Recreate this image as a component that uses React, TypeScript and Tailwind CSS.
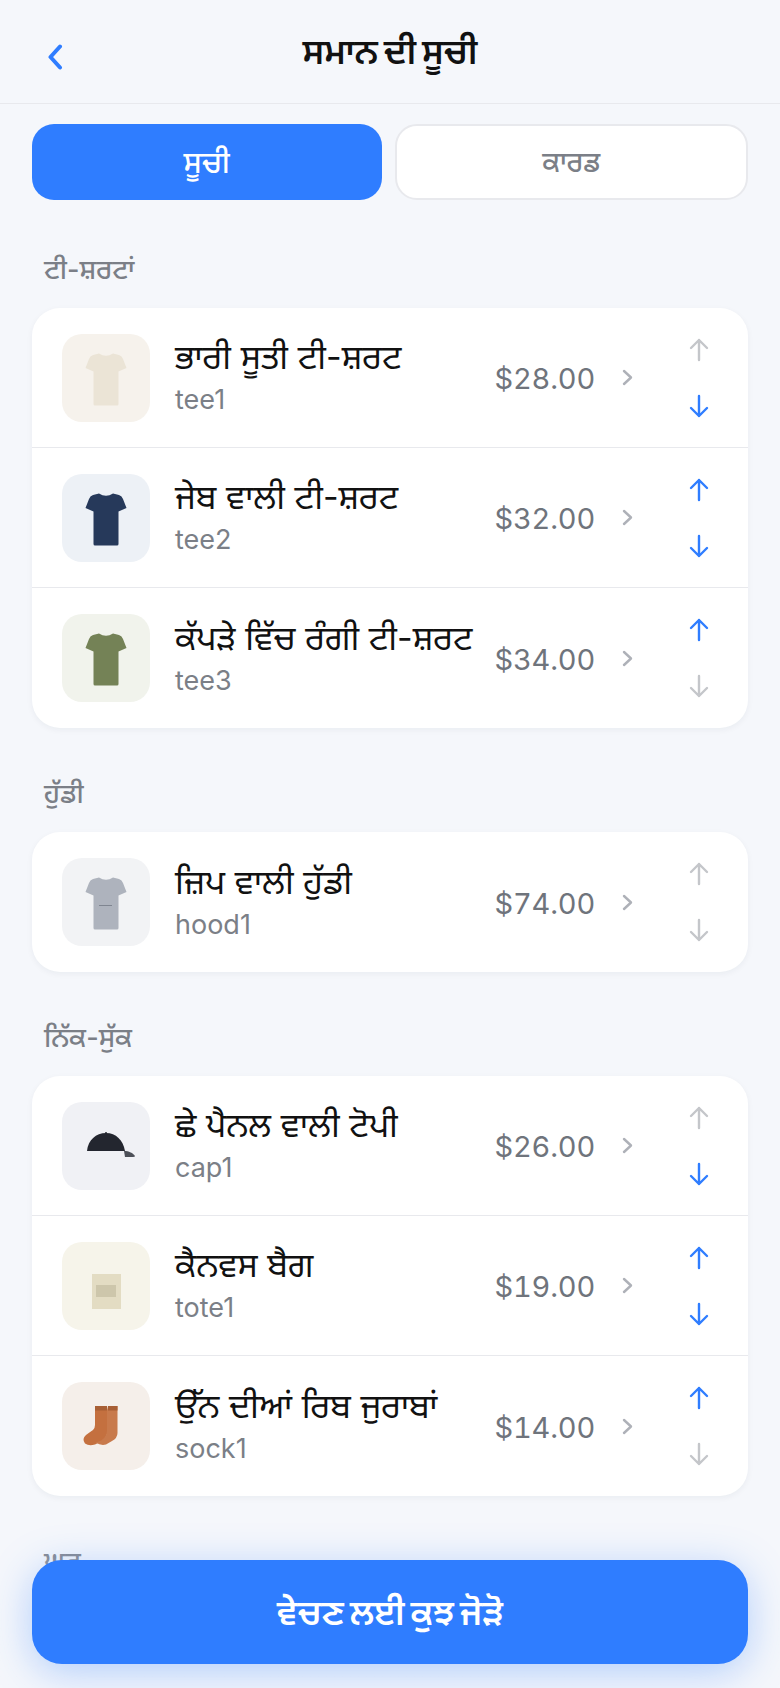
import React from 'react';

type Item = {
    name: string;
    sku: string;
    price: string;
    tile: string;
    art: React.ReactNode;
    up: boolean;
    down: boolean;
};

const Tee = ({ color, line }: { color: string; line?: boolean }) => (
    <svg width="88" height="88" viewBox="0 0 88 88">
        <path
            d="M37 19.5 Q44 24 51 19.5 L57 21 Q60 22 61 25 L64.5 34 L56.5 37.5 L56.5 70 Q56.5 71.5 55 71.5 L33 71.5 Q31.5 71.5 31.5 70 L31.5 37.5 L23.5 34 L27 25 Q28 22 31 21 Z"
            fill={color}
        />
        {line && <rect x="37" y="47" width="13" height="1" fill="#7f8590" />}
    </svg>
);

const Cap = () => (
    <svg width="88" height="88" viewBox="0 0 88 88">
        <path d="M25 49 C26 38 34 31 44 31 C54 31 61 38 63 49 Z" fill="#23262f" />
        <circle cx="44" cy="31" r="1" fill="#23262f" />
        <path d="M62 49 C67 49 71 51 73 54 Q73 55 71 55 L63 55 Z" fill="#4d5058" />
    </svg>
);

const Tote = () => (
    <svg width="88" height="88" viewBox="0 0 88 88">
        <rect x="30" y="32" width="29" height="35" fill="#e3dcc3" />
        <rect x="34" y="43" width="20" height="12" fill="#cdc6ab" />
    </svg>
);

const Socks = () => (
    <svg width="88" height="88" viewBox="0 0 88 88">
        <path d="M33 24 H45 V52 Q44 57 38 60 L33 62.5 Q27 64.5 23 61.5 Q19.5 57 24 53 Q28 50 31 48 Q33 46 33 43 Z" fill="#c4703f" />
        <path d="M46 24 H55.5 V51 Q55.5 56 50 59 L44 62.5 Q39 64 33.5 60.5 Q40 59 43 55 Q45 52 45 48 V28 Z" fill="#c87a4c" />
        <rect x="33" y="24" width="12" height="4.5" fill="#a85f35" />
        <rect x="46" y="24" width="9.5" height="4.5" fill="#a85f35" />
    </svg>
);

const sections: { title: string; items: Item[] }[] = [
    {
        title: 'ਟੀ-ਸ਼ਰਟਾਂ',
        items: [
            { name: 'ਭਾਰੀ ਸੂਤੀ ਟੀ-ਸ਼ਰਟ', sku: 'tee1', price: '$28.00', tile: 'bg-[#f6f2ec]', art: <Tee color="#ebe4d6" />, up: false, down: true },
            { name: 'ਜੇਬ ਵਾਲੀ ਟੀ-ਸ਼ਰਟ', sku: 'tee2', price: '$32.00', tile: 'bg-[#edf1f6]', art: <Tee color="#26395a" />, up: true, down: true },
            { name: 'ਕੱਪੜੇ ਵਿੱਚ ਰੰਗੀ ਟੀ-ਸ਼ਰਟ', sku: 'tee3', price: '$34.00', tile: 'bg-[#f1f3ec]', art: <Tee color="#748256" />, up: true, down: false },
        ],
    },
    {
        title: 'ਹੁੱਡੀ',
        items: [
            { name: 'ਜ਼ਿਪ ਵਾਲੀ ਹੁੱਡੀ', sku: 'hood1', price: '$74.00', tile: 'bg-[#f2f3f5]', art: <Tee color="#aeb3bd" line />, up: false, down: false },
        ],
    },
    {
        title: 'ਨਿੱਕ-ਸੁੱਕ',
        items: [
            { name: 'ਛੇ ਪੈਨਲ ਵਾਲੀ ਟੋਪੀ', sku: 'cap1', price: '$26.00', tile: 'bg-[#f0f1f5]', art: <Cap />, up: false, down: true },
            { name: 'ਕੈਨਵਸ ਬੈਗ', sku: 'tote1', price: '$19.00', tile: 'bg-[#f6f4ea]', art: <Tote />, up: true, down: true },
            { name: 'ਉੱਨ ਦੀਆਂ ਰਿਬ ਜੁਰਾਬਾਂ', sku: 'sock1', price: '$14.00', tile: 'bg-[#f5efea]', art: <Socks />, up: true, down: false },
        ],
    },
];

const Arrow = ({ dir, on }: { dir: 'up' | 'down'; on: boolean }) => (
    <svg width="20" height="24" viewBox="0 0 20 24" fill="none" stroke={on ? '#2f7dff' : '#c4c6ca'} strokeWidth="2.4" strokeLinecap="round" strokeLinejoin="round">
        {dir === 'up' ? <path d="M10 2 V22 M2 10 L10 2 L18 10" /> : <path d="M10 22 V2 M2 14 L10 22 L18 14" />}
    </svg>
);

const Row = ({ item, last }: { item: Item; last: boolean }) => (
    <div className={`flex h-[140px] items-center pl-[30px] pr-[39px] ${last ? '' : 'border-b border-[#e8e9ed]'}`}>
        <div className={`flex h-[88px] w-[88px] shrink-0 items-center justify-center rounded-[20px] ${item.tile}`}>{item.art}</div>
        <div className="ml-[25px] flex min-w-0 flex-1 flex-col gap-[5px]">
            <div className="whitespace-nowrap text-[34px] leading-[40px] text-[#111111]">{item.name}</div>
            <div className="text-[27px] leading-[36px] text-[#7b7f87]">{item.sku}</div>
        </div>
        <div className="pt-[3px] text-[29px] tracking-[-0.2px] text-[#6f747c] tabular-nums">{item.price}</div>
        <svg className="ml-[27px]" width="11" height="17" viewBox="0 0 11 17" fill="none" stroke="#aeb1b8" strokeWidth="2.4" strokeLinecap="round" strokeLinejoin="round">
            <path d="M2 2 L9 8.5 L2 15" />
        </svg>
        <div className="ml-[56px] flex w-[20px] flex-col items-center gap-[32px]">
            <Arrow dir="up" on={item.up} />
            <Arrow dir="down" on={item.down} />
        </div>
    </div>
);

export default function App() {
    return (
        <div className="relative h-[1688px] w-[780px] overflow-hidden bg-[#f5f7fb] font-['Inter','Noto_Sans_Gurmukhi','Noto_Sans',sans-serif]">
            <header className="relative flex h-[104px] items-center justify-center border-b border-[#e8e9ed]">
                <svg className="absolute top-[44px] left-[46px]" width="18" height="26" viewBox="0 0 18 26" fill="none" stroke="#2f7dff" strokeWidth="4" strokeLinecap="round" strokeLinejoin="round">
                    <path d="M14 2.5 L4.5 13 L14 23.5" />
                </svg>
                <h1 className="text-[35px] font-semibold text-[#111111] [word-spacing:-3px]">ਸਮਾਨ ਦੀ ਸੂਚੀ</h1>
            </header>

            <div className="flex gap-[13px] px-[32px] pt-[20px]">
                <div className="flex h-[76px] flex-1 items-center justify-center rounded-[22px] bg-[#2f7dff] text-[30px] font-medium text-white">ਸੂਚੀ</div>
                <div className="flex h-[76px] flex-1 items-center justify-center rounded-[22px] border-2 border-[#e8e9ed] bg-white text-[28px] font-medium text-[#7b7f87]">ਕਾਰਡ</div>
            </div>

            <main className="px-[32px] pt-[50px]">
                {sections.map((section) => (
                    <section key={section.title} className="mb-[46px]">
                        <h2 className="mb-[18px] pl-[12px] text-[27px] leading-[40px] font-medium text-[#7b7f87]">{section.title}</h2>
                        <div className="rounded-[28px] bg-white shadow-[0_2px_6px_rgba(20,30,60,0.05)]">
                            {section.items.map((item, i) => (
                                <Row key={item.sku} item={item} last={i === section.items.length - 1} />
                            ))}
                        </div>
                    </section>
                ))}
                <h2 className="pl-[12px] text-[27px] leading-[40px] font-medium text-[#7b7f87]">ਘਰ</h2>
            </main>

            <div className="absolute right-0 bottom-0 left-0 bg-gradient-to-b from-transparent to-[#f5f7fb] px-[32px] pt-[24px] pb-[24px]">
                <button className="flex h-[104px] w-full items-center justify-center rounded-[30px] bg-[#2f7dff] text-[35px] font-semibold text-white shadow-[0_8px_40px_rgba(47,125,255,0.34)] [word-spacing:-3px]">
                    ਵੇਚਣ ਲਈ ਕੁਝ ਜੋੜੋ
                </button>
            </div>
        </div>
    );
}
